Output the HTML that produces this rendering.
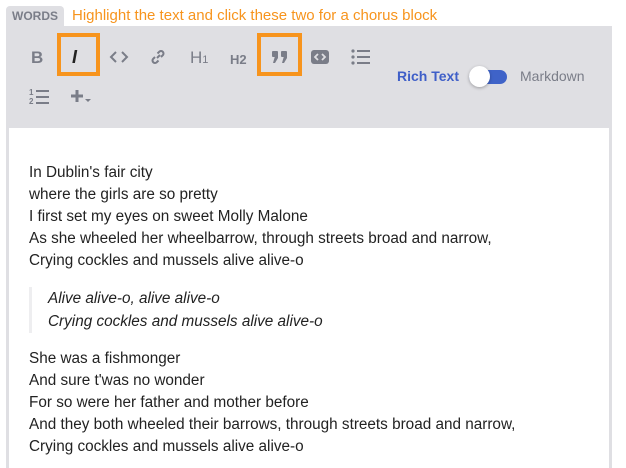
<!DOCTYPE html>
<html><head><style>
body{margin:0;width:626px;height:468px;background:#fff;font-family:"Liberation Sans",sans-serif;overflow:hidden;position:relative}
.tab{position:absolute;left:6px;top:6px;width:58px;height:21px;background:#dfdfe3;border-radius:4px 4px 0 0;color:#7a7d88;font-size:12px;font-weight:bold;line-height:21px;text-align:center}
.hint{position:absolute;left:72px;top:7px;color:#f7941d;font-size:15px}
.bar{position:absolute;left:6px;top:26px;width:606px;height:102px;background:#dfdfe3}
.ed{position:absolute;left:6px;top:128px;width:600px;height:340px;background:#fff;border-left:3px solid #dfdfe3;border-right:3px solid #dfdfe3}
.ic{position:absolute;color:#7a7d88;font-weight:bold}
.box{position:absolute;border:4px solid #f7941d;box-sizing:border-box}
.txt{position:absolute;left:29px;top:162px;font-size:15.3px;color:#222;line-height:22px}
.bq{margin:15px 0 15px 0;border-left:3px solid #eeeef0;padding-left:16px;font-style:italic;line-height:23px}
p{margin:0}
</style></head><body>
<div class="tab">WORDS</div>
<div class="hint">Highlight the text and click these two for a chorus block</div>
<div class="bar"></div>
<div class="ic" style="left:31px;top:48px;font-size:17px">B</div>
<div class="ic" style="left:72px;top:47px;font-size:18px;color:#222;font-style:italic;font-weight:bold">I</div>
<div class="box" style="left:57px;top:33px;width:43px;height:43px"></div>
<svg class="ic" style="left:109px;top:49px" width="20" height="16" viewBox="0 0 20 16"><path d="M7 3L2 8l5 5M13 3l5 5-5 5" fill="none" stroke="#7a7d88" stroke-width="2"/></svg>
<svg class="ic" style="left:149px;top:48px" width="18" height="18" viewBox="0 0 18 18"><path d="M8 10l3-3M6 9l-2 2a2.5 2.5 0 003.5 3.5l2-2M12 9l2-2a2.5 2.5 0 00-3.5-3.5l-2 2" fill="none" stroke="#7a7d88" stroke-width="2"/></svg>
<div class="ic" style="left:190px;top:48px;font-size:17px;font-weight:normal">H<span style="font-size:11px">1</span></div>
<div class="ic" style="left:230px;top:52px;font-size:13px">H2</div>
<div class="box" style="left:257px;top:33px;width:45px;height:43px"></div>
<svg style="position:absolute;left:272px;top:51px" width="16" height="12"><g fill="#7a7d88"><rect x="0" y="0" width="6" height="6" rx="1"/><path d="M3 5h3v2l-3 5H1z"/><rect x="9" y="0" width="6" height="6" rx="1"/><path d="M12 5h3v2l-3 5h-2z"/></g></svg>
<svg style="position:absolute;left:311px;top:50px" width="18" height="14"><rect width="18" height="14" rx="3" fill="#7a7d88"/><path d="M7 4L4 7l3 3M11 4l3 3-3 3" fill="none" stroke="#dfdfe3" stroke-width="1.8"/></svg>
<svg style="position:absolute;left:351px;top:48px" width="19" height="17"><g fill="#7a7d88"><circle cx="2" cy="3" r="1.6"/><circle cx="2" cy="9" r="1.6"/><circle cx="2" cy="15" r="1.6"/><rect x="6" y="2" width="13" height="2"/><rect x="6" y="8" width="13" height="2"/><rect x="6" y="14" width="13" height="2"/></g></svg>
<div style="position:absolute;left:397px;top:68px;font-size:14px;font-weight:bold;color:#3f5fc8">Rich Text</div>
<div style="position:absolute;left:469px;top:70px;width:38px;height:14px;border-radius:7px;background:#3f63c8"></div>
<div style="position:absolute;left:469px;top:66px;width:21px;height:21px;border-radius:50%;background:#fff;box-shadow:0 1px 3px rgba(0,0,0,.3)"></div>
<div style="position:absolute;left:520px;top:68px;font-size:14px;color:#7a7d88">Markdown</div>
<svg style="position:absolute;left:29px;top:87px" width="22" height="18"><text x="0" y="8" font-size="8" fill="#7a7d88" font-family="Liberation Sans" font-weight="bold">1</text><text x="0" y="17" font-size="8" fill="#7a7d88" font-family="Liberation Sans" font-weight="bold">2</text><g fill="#7a7d88"><rect x="7" y="3" width="13" height="2"/><rect x="7" y="9" width="13" height="2"/><rect x="7" y="15" width="13" height="2"/></g></svg>
<svg style="position:absolute;left:70px;top:88px" width="22" height="18"><path d="M7 2v12M1 8h12" stroke="#7a7d88" stroke-width="3"/><path d="M15 11h6l-3 3z" fill="#7a7d88"/></svg>
<div class="ed"></div>
<div class="txt">
<p>In Dublin's fair city<br>where the girls are so pretty<br>I first set my eyes on sweet Molly Malone<br>As she wheeled her wheelbarrow, through streets broad and narrow,<br>Crying cockles and mussels alive alive-o</p>
<div class="bq">Alive alive-o, alive alive-o<br>Crying cockles and mussels alive alive-o</div>
<p>She was a fishmonger<br>And sure t'was no wonder<br>For so were her father and mother before<br>And they both wheeled their barrows, through streets broad and narrow,<br>Crying cockles and mussels alive alive-o</p>
</div>
</body></html>
